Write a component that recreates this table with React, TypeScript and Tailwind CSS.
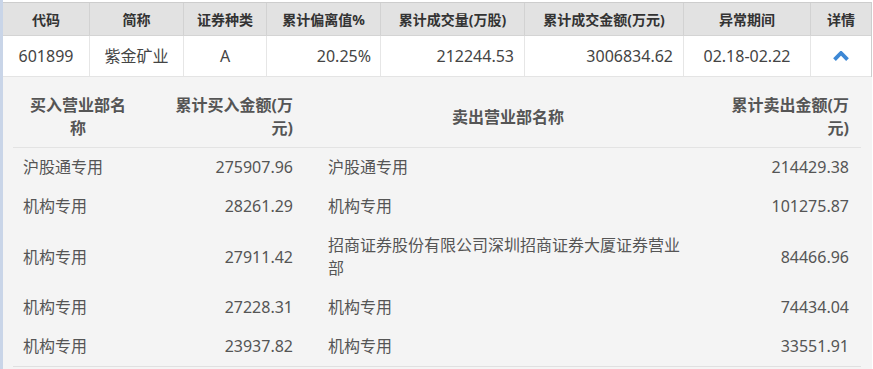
const font = "font-['Noto_Sans','Noto_Sans_CJK_SC',sans-serif]";

const head = ["代码", "简称", "证券种类", "累计偏离值%", "累计成交量(万股)", "累计成交金额(万元)", "异常期间", "详情"];

const rows = [
  { buyName: "沪股通专用", buy: "275907.96", sellName: "沪股通专用", sell: "214429.38" },
  { buyName: "机构专用", buy: "28261.29", sellName: "机构专用", sell: "101275.87" },
  { buyName: "机构专用", buy: "27911.42", sellName: "招商证券股份有限公司深圳招商证券大厦证券营业部", sell: "84466.96" },
  { buyName: "机构专用", buy: "27228.31", sellName: "机构专用", sell: "74434.04" },
  { buyName: "机构专用", buy: "23937.82", sellName: "机构专用", sell: "33551.91" },
];

const cols = "grid grid-cols-[86px_94px_83px_114px_144px_159px_127px_61px]";
const detailCols = "grid grid-cols-[130px_160px_395px_163px]";

export default function App() {
  return (
    <div className={`flex h-[369px] w-[873px] overflow-hidden bg-white ${font}`}>
      <div className="w-[3px] shrink-0 bg-[#c9d5e8]" />
      <div className="mt-[2px] flex w-[869px] flex-col">
        {/* summary table */}
        <div className="border-t border-r border-[#cdcdcd]">
          <div className={`${cols} h-[33px] border-b border-[#d4d4d4] bg-[#e2e2e2]`}>
            {head.map((h, i) => (
              <div
                key={h}
                className={`flex items-center justify-center text-[14px] font-bold text-[#333] ${i > 0 ? "border-l border-[#d2d2d2]" : ""}`}
              >
                {h}
              </div>
            ))}
          </div>
          <div className={`${cols} h-[41px] border-b border-[#e4e4e4] bg-white text-[16px] text-[#444]`}>
            <div className="flex items-center justify-center">601899</div>
            <div className="flex items-center justify-center border-l border-[#e6e6e6]">紫金矿业</div>
            <div className="flex items-center justify-center border-l border-[#e6e6e6]">A</div>
            <div className="flex items-center justify-end border-l border-[#e6e6e6] pr-[9px]">20.25%</div>
            <div className="flex items-center justify-end border-l border-[#e6e6e6] pr-[10px]">212244.53</div>
            <div className="flex items-center justify-end border-l border-[#e6e6e6] pr-[10px]">3006834.62</div>
            <div className="flex items-center justify-center border-l border-[#e6e6e6]">02.18-02.22</div>
            <div className="flex items-center justify-center border-l border-[#e6e6e6]">
              <svg width="16" height="10" viewBox="0 0 16 10">
                <polyline points="1.5,8.6 8,2 14.5,8.6" fill="none" stroke="#3d88d5" strokeWidth="3.8" />
              </svg>
            </div>
          </div>
        </div>

        {/* detail panel */}
        <div className="flex-1 bg-[#f4f4f4] pl-[10px]">
          <div className="w-[848px]">
            <div className={`${detailCols} h-[71px] items-center border-b border-[#e3e3e3] pt-[10px] text-[16px] font-bold leading-[23px] text-[#555]`}>
              <div className="px-[10px] text-center">买入营业部名称</div>
              <div className="pl-[20px] pr-[10px] text-right">累计买入金额(万元)</div>
              <div className="pl-[25px] pr-[10px] text-center">卖出营业部名称</div>
              <div className="pl-[25px] pr-[12px] text-right">累计卖出金额(万元)</div>
            </div>
            <div className="border-b border-[#e0e0e0]">
              {rows.map((r, i) => (
                <div key={i} className={`${detailCols} items-center py-[8px] text-[16px] leading-[23px] text-[#555]`}>
                  <div className="pl-[10px]">{r.buyName}</div>
                  <div className="pr-[10px] text-right">{r.buy}</div>
                  <div className="pl-[25px] pr-[10px]">{r.sellName}</div>
                  <div className="pr-[12px] text-right">{r.sell}</div>
                </div>
              ))}
            </div>
          </div>
        </div>
      </div>
    </div>
  );
}
